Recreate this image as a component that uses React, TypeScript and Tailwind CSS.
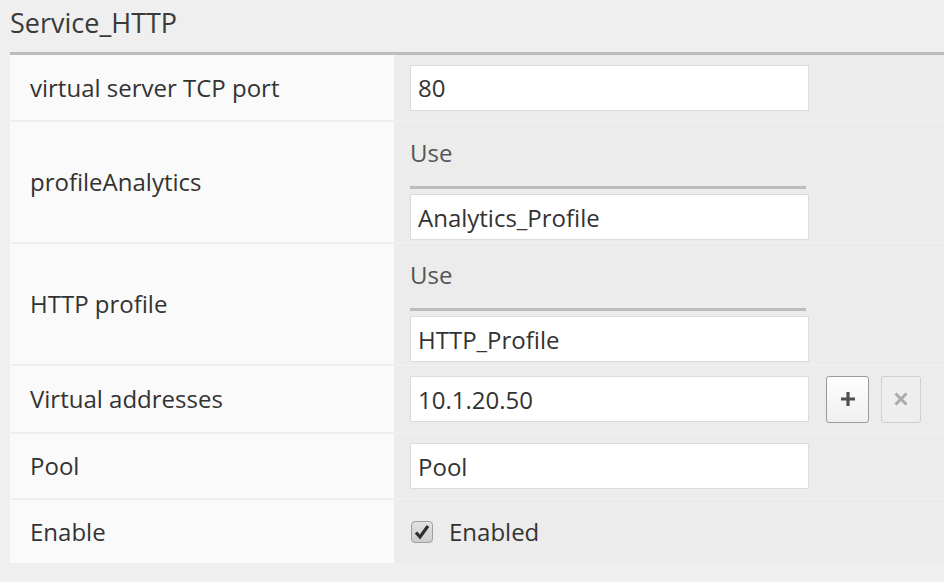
import React from "react";

const inputCls =
  "h-[46px] w-[399px] bg-white border border-[#dcdcdc] px-[7px] text-[24px] text-[#333] outline-none font-['Open_Sans',sans-serif]";

function Row({ label, height, children }: { label: string; height: string; children: React.ReactNode }) {
  return (
    <div className={`flex ${height}`}>
      <div className="w-[384px] shrink-0 bg-[#fafafa] flex items-center pl-[20px] text-[24px] text-[#333]">
        {label}
      </div>
      <div className="flex-1 bg-[#ececec] pl-[16px] flex items-center">{children}</div>
    </div>
  );
}

function UseBlock({ value }: { value: string }) {
  return (
    <div className="flex flex-col self-start pt-[16px]">
      <div className="h-[30px] leading-[30px] text-[24px] text-[#555]">Use</div>
      <div className="mt-[18px] h-[3px] w-[396px] bg-[#bcbcbc]" />
      <input className={`${inputCls} mt-[5px]`} defaultValue={value} />
    </div>
  );
}

export default function App() {
  return (
    <div className="w-[944px] h-[582px] bg-[#efefef] font-['Open_Sans',sans-serif] text-[#333] overflow-hidden">
      <div className="pl-[10px]">
        <div className="h-[52px] pt-[5px] text-[27px] leading-[36px] text-[#3a3a3a]">Service_HTTP</div>
        <div className="h-[3px] bg-[#bcbcbc]" />
        <div className="flex flex-col gap-[2px]">
          <Row label="virtual server TCP port" height="h-[65px]">
            <input className={inputCls} defaultValue="80" />
          </Row>
          <Row label="profileAnalytics" height="h-[120px]">
            <UseBlock value="Analytics_Profile" />
          </Row>
          <Row label="HTTP profile" height="h-[120px]">
            <UseBlock value="HTTP_Profile" />
          </Row>
          <Row label="Virtual addresses" height="h-[66px]">
            <input className={inputCls} defaultValue="10.1.20.50" />
            <button className="ml-[17px] w-[43px] h-[47px] rounded-[3px] border border-[#9a9a9a] bg-gradient-to-b from-white to-[#efefef] flex items-center justify-center">
              <svg width="16" height="16" viewBox="0 0 16 16">
                <path d="M8 1v14M1 8h14" stroke="#505050" strokeWidth="3.2" />
              </svg>
            </button>
            <button className="ml-[12px] w-[40px] h-[47px] rounded-[3px] border border-[#cfcfcf] bg-[#eeeeee] flex items-center justify-center">
              <svg width="14" height="14" viewBox="0 0 14 14">
                <path d="M1.5 1.5l11 11M12.5 1.5l-11 11" stroke="#ababab" strokeWidth="3" />
              </svg>
            </button>
          </Row>
          <Row label="Pool" height="h-[64px]">
            <input className={inputCls} defaultValue="Pool" />
          </Row>
          <Row label="Enable" height="h-[63px]">
            <label className="flex items-center text-[24px] text-[#333]">
              <span className="ml-[1px] w-[22px] h-[22px] rounded-[4px] border border-[#a0a0a0] bg-gradient-to-b from-[#e2e2e2] to-[#cdcdcd] flex items-center justify-center">
                <svg width="18" height="18" viewBox="0 0 18 18">
                  <path d="M3 9.5l4 4.5 8-11" fill="none" stroke="#2e2e2e" strokeWidth="3.2" />
                </svg>
              </span>
              <span className="ml-[16px]">Enabled</span>
            </label>
          </Row>
        </div>
      </div>
    </div>
  );
}
